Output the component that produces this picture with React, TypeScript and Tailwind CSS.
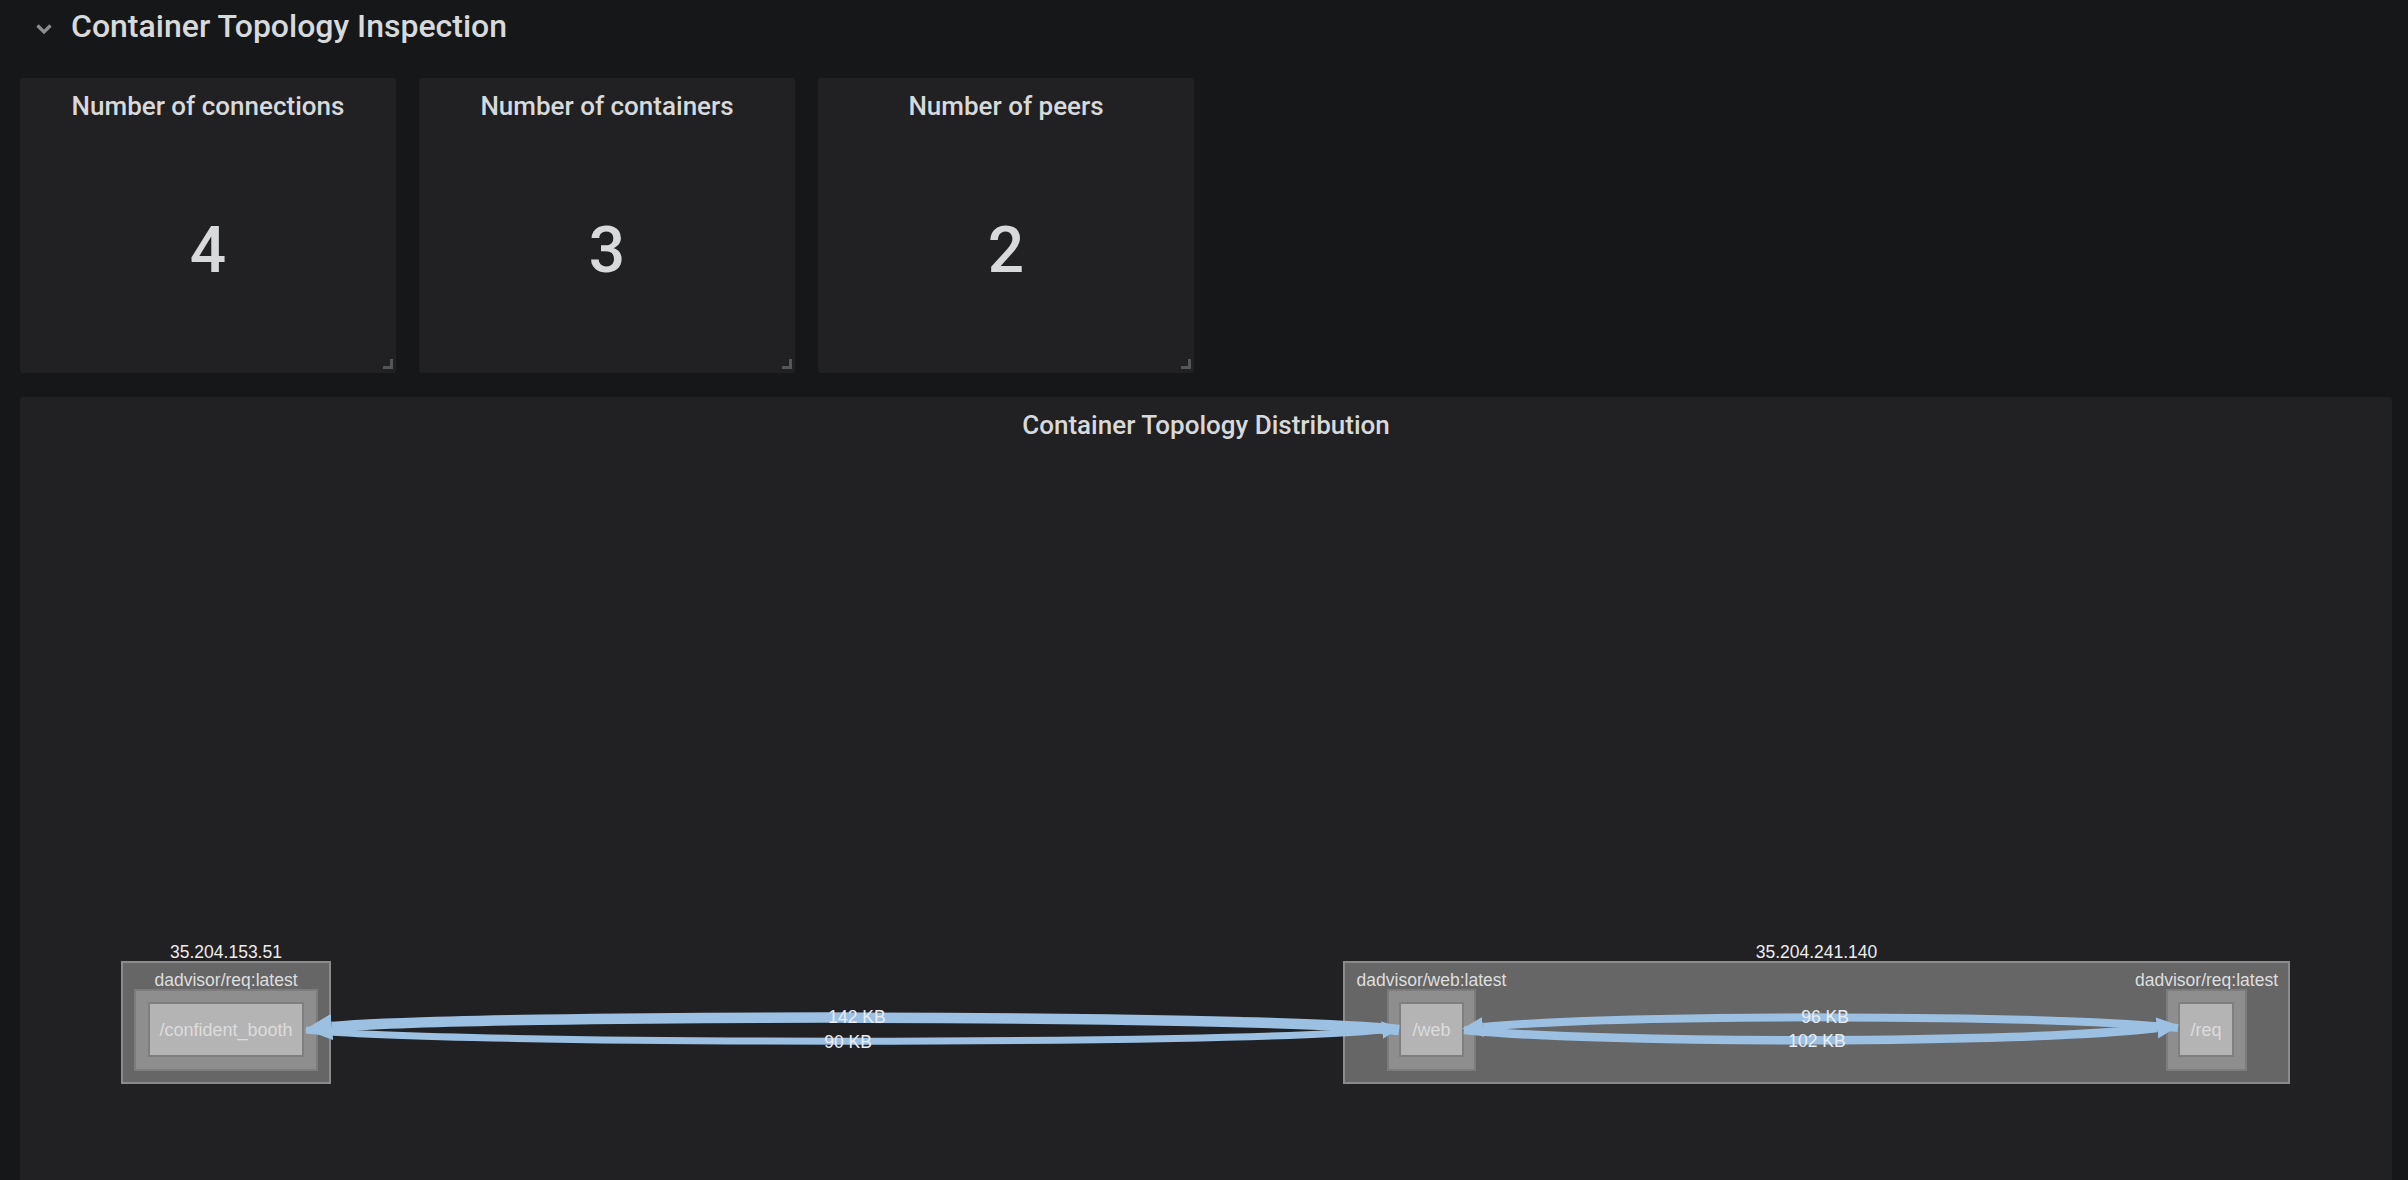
import React from 'react';

type Box = { x: number; y: number; w: number; h: number };

const stats = [
  { title: 'Number of connections', value: 4 },
  { title: 'Number of containers', value: 3 },
  { title: 'Number of peers', value: 2 },
];

// diagram coordinates are page coordinates; the group is shifted to the svg origin
const OFFSET_X = 20;
const OFFSET_Y = 438;

const hosts = [
  { ip: '35.204.153.51', box: { x: 121, y: 961, w: 210, h: 123 } },
  { ip: '35.204.241.140', box: { x: 1343, y: 961, w: 947, h: 123 } },
];

const containers = [
  {
    image: 'dadvisor/req:latest',
    name: '/confident_booth',
    outer: { x: 134, y: 989, w: 184, h: 82 },
    inner: { x: 148, y: 1002, w: 156, h: 55 },
  },
  {
    image: 'dadvisor/web:latest',
    name: '/web',
    outer: { x: 1387, y: 989, w: 89, h: 82 },
    inner: { x: 1399, y: 1002, w: 65, h: 55 },
  },
  {
    image: 'dadvisor/req:latest',
    name: '/req',
    outer: { x: 2166, y: 989, w: 81, h: 82 },
    inner: { x: 2178, y: 1002, w: 56, h: 55 },
  },
];

const edges = [
  { d: 'M 1399 1030 C 1250 1014 480 1014 332 1027', width: 10.5 },
  { d: 'M 306 1030 C 450 1045 1240 1045 1382 1030', width: 7 },
  { d: 'M 2178 1028 C 2030 1014 1630 1014 1483 1027', width: 8 },
  { d: 'M 1464 1030 C 1610 1044 2020 1044 2157 1028', width: 8.5 },
];

const edgeLabels = [
  { text: '142 KB', x: 857, y: 1023 },
  { text: '90 KB', x: 848, y: 1048 },
  { text: '96 KB', x: 1825, y: 1023 },
  { text: '102 KB', x: 1817, y: 1047 },
];

function rect(b: Box, fill: string, stroke: string, sw: number) {
  return (
    <rect
      x={b.x + sw / 2}
      y={b.y + sw / 2}
      width={b.w - sw}
      height={b.h - sw}
      fill={fill}
      stroke={stroke}
      strokeWidth={sw}
    />
  );
}

function StatPanel({ title, value }: { title: string; value: number }) {
  return (
    <div className="relative h-[295px] w-[376px] rounded-[3px] bg-[#212124]">
      <div className="pt-[15px] text-center text-[26px] font-medium leading-none text-[#d8d9da]">
        {title}
      </div>
      <div className="mt-[100px] text-center text-[64px] font-medium leading-none text-[#d8d9da]">
        {value}
      </div>
      <div className="absolute bottom-[4px] right-[3px] h-[10px] w-[10px] border-b-[3px] border-r-[3px] border-[#55565a]" />
    </div>
  );
}

function Topology() {
  return (
    <svg width={2372} height={742} className="block" style={{ fontFamily: '"Liberation Sans", Arial, sans-serif' }}>
      <defs>
        <marker
          id="arrow"
          viewBox="0 0 26 25"
          markerWidth={2.6}
          markerHeight={2.5}
          refX={0}
          refY={12.5}
          orient="auto"
          markerUnits="strokeWidth"
        >
          <path d="M0,0 L26,12.5 L0,25 z" fill="#9bc0e2" />
        </marker>
      </defs>
      <g transform={`translate(${-OFFSET_X} ${-OFFSET_Y})`}>
        {hosts.map((h) => (
          <g key={h.ip}>
            <text x={h.box.x + h.box.w / 2} y={958} textAnchor="middle" fontSize={17.5} fill="#ececec">
              {h.ip}
            </text>
            {rect(h.box, '#666667', '#8b8b8b', 2)}
          </g>
        ))}
        {containers.map((c) => (
          <g key={c.name}>
            <text x={c.outer.x + c.outer.w / 2} y={986} textAnchor="middle" fontSize={17.5} fill="#dedede">
              {c.image}
            </text>
            {rect(c.outer, '#8e8e8e', '#7c7c7c', 2)}
            {rect(c.inner, '#b4b4b4', '#7f7f7f', 2)}
            <text x={c.inner.x + c.inner.w / 2} y={1036} textAnchor="middle" fontSize={18} fill="#dcdcdc">
              {c.name}
            </text>
          </g>
        ))}
        {edges.map((e, i) => (
          <path key={i} d={e.d} fill="none" stroke="#9bc0e2" strokeWidth={e.width} markerEnd="url(#arrow)" />
        ))}
        {edgeLabels.map((l) => (
          <text key={l.text} x={l.x} y={l.y} textAnchor="middle" fontSize={17.5} fill="#e9edf2">
            {l.text}
          </text>
        ))}
      </g>
    </svg>
  );
}

export default function App() {
  return (
    <div className="h-[1180px] w-full overflow-hidden bg-[#161719] font-['Roboto',sans-serif]">
      <div className="flex h-[52px] items-center pl-[35px]">
        <svg width="18" height="12" viewBox="0 0 18 12" className="mt-[6px]">
          <polyline points="2.5,2.5 9,9 15.5,2.5" fill="none" stroke="#8e8e8e" strokeWidth="3.2" />
        </svg>
        <span className="ml-[18px] text-[32px] font-medium leading-none text-[#d8d9da]">
          Container Topology Inspection
        </span>
      </div>

      <div className="mt-[26px] flex gap-[23px] pl-[20px]">
        {stats.map((s) => (
          <StatPanel key={s.title} title={s.title} value={s.value} />
        ))}
      </div>

      <div className="ml-[20px] mt-[24px] h-[800px] w-[2372px] rounded-[3px] bg-[#212124]">
        <div className="pt-[15px] text-center text-[26px] font-medium leading-none text-[#d8d9da]">
          Container Topology Distribution
        </div>
        <Topology />
      </div>
    </div>
  );
}
